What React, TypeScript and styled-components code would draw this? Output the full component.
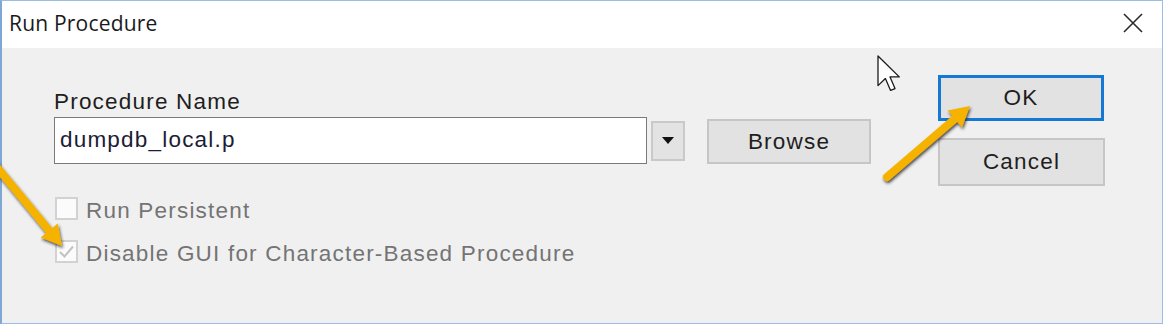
import React from "react";
import styled, { createGlobalStyle } from "styled-components";

const GlobalStyle = createGlobalStyle`
  html, body {
    margin: 0;
    padding: 0;
    background: #f0f0f0;
    overflow: hidden;
  }
`;

// janela principal
const Window = styled.div`
  position: relative;
  width: 1163px;
  height: 324px;
  box-sizing: border-box;
  background: #f0f0f0;
  border: 1px solid #9cbde3;
  border-left: 2px solid #7fa7d6;
  display: flex;
  flex-direction: column;
  font-family: "Liberation Sans", Arial, sans-serif;
`;

const TitleBar = styled.div`
  height: 47px;
  background: #ffffff;
  display: flex;
  align-items: center;
  justify-content: space-between;
  padding: 0 0 3px 7px;
  box-sizing: border-box;
`;

const Title = styled.span`
  font-family: "Open Sans", "Noto Sans", sans-serif;
  font-size: 21px;
  letter-spacing: 0.2px;
  color: #1a1a1a;
`;

const CloseButton = styled.div`
  width: 46px;
  height: 44px;
  display: flex;
  align-items: center;
  justify-content: center;
  margin-right: 6px;
`;

const Body = styled.div`
  flex: 1;
  display: flex;
  justify-content: space-between;
  padding: 0 57px 0 52px;
`;

const LeftColumn = styled.div`
  display: flex;
  flex-direction: column;
  padding-top: 41px;
`;

const RightColumn = styled.div`
  display: flex;
  flex-direction: column;
  padding-top: 27px;
  gap: 17px;
`;

const Label = styled.div<{ $disabled?: boolean }>`
  font-size: 22.5px;
  line-height: 25px;
  letter-spacing: 1.2px;
  color: ${(p) => (p.$disabled ? "#747474" : "#1e1e1e")};
  white-space: nowrap;
`;

const InputRow = styled.div`
  display: flex;
  align-items: center;
  margin-top: 3px;
  height: 47px;
`;

const TextBox = styled.input`
  width: 593px;
  height: 47px;
  box-sizing: border-box;
  border: 1px solid #7a7a7a;
  background: #ffffff;
  padding: 0 0 1px 5px;
  font-family: "Liberation Sans", Arial, sans-serif;
  font-size: 22.5px;
  letter-spacing: 1.2px;
  color: #1c1c34;
  outline: none;
`;

const DropButton = styled.div`
  width: 34px;
  height: 40px;
  margin-left: 4px;
  box-sizing: border-box;
  border: 2px solid #c9c9c9;
  background: #e3e3e3;
  display: flex;
  align-items: center;
  justify-content: center;
`;

const Button = styled.div<{ $width: number; $height: number; $default?: boolean }>`
  width: ${(p) => p.$width}px;
  height: ${(p) => p.$height}px;
  box-sizing: border-box;
  border: ${(p) => (p.$default ? "3px solid #1478d4" : "2px solid #c6c6c6")};
  background: #e2e2e2;
  display: flex;
  align-items: center;
  justify-content: center;
  font-size: 22.5px;
  letter-spacing: 1.2px;
  color: #1e1e1e;
`;

const BrowseButton = styled(Button)`
  margin-left: 22px;
  margin-top: 2px;
`;

const Options = styled.div`
  display: flex;
  flex-direction: column;
  gap: 20px;
  margin-top: 33px;
  padding-left: 1px;
`;

const CheckRow = styled.div`
  display: flex;
  align-items: center;
  gap: 8px;
  height: 23px;
`;

const CheckText = styled(Label)`
  margin-top: 3px;
`;

const CheckBox = styled.div`
  width: 23px;
  height: 23px;
  box-sizing: border-box;
  border: 2px solid #d2d2d2;
  background: #fbfbfb;
  display: flex;
  align-items: center;
  justify-content: center;
`;

const Overlay = styled.svg`
  position: absolute;
  left: -2px;
  top: -1px;
  width: 1163px;
  height: 324px;
  pointer-events: none;
`;

function CheckOption({ label, checked }: { label: string; checked?: boolean }) {
  return (
    <CheckRow>
      <CheckBox>
        {checked && (
          <svg width="17" height="15" viewBox="0 0 17 15">
            <path d="M2 8 L6.5 12.5 L15 2.5" fill="none" stroke="#c2c2c2" strokeWidth="2" />
          </svg>
        )}
      </CheckBox>
      <CheckText $disabled>{label}</CheckText>
    </CheckRow>
  );
}

export default function App() {
  return (
    <>
      <GlobalStyle />
      <Window>
        <TitleBar>
          <Title>Run Procedure</Title>
          <CloseButton>
            <svg width="20" height="20" viewBox="0 0 20 20">
              <path d="M1 1 L19 19 M19 1 L1 19" stroke="#2b2b2b" strokeWidth="1.6" />
            </svg>
          </CloseButton>
        </TitleBar>
        <Body>
          <LeftColumn>
            <Label>Procedure Name</Label>
            <InputRow>
              <TextBox value="dumpdb_local.p" readOnly />
              <DropButton>
                <svg width="12" height="7" viewBox="0 0 12 7">
                  <path d="M0 0 L12 0 L6 7 Z" fill="#111" />
                </svg>
              </DropButton>
              <BrowseButton $width={164} $height={45}>
                Browse
              </BrowseButton>
            </InputRow>
            <Options>
              <CheckOption label="Run Persistent" />
              <CheckOption label="Disable GUI for Character-Based Procedure" checked />
            </Options>
          </LeftColumn>
          <RightColumn>
            <Button $width={166} $height={46} $default>
              OK
            </Button>
            <Button $width={167} $height={48}>
              Cancel
            </Button>
          </RightColumn>
        </Body>

        {/* anotações por cima: setas amarelas e cursor */}
        <Overlay viewBox="0 0 1163 324">
          <defs>
            <filter id="sombra" x="-20%" y="-20%" width="140%" height="140%">
              <feDropShadow dx="1" dy="2" stdDeviation="1.5" floodColor="#222" floodOpacity="0.8" />
            </filter>
          </defs>
          <g filter="url(#sombra)">
            <line x1="887" y1="177" x2="957" y2="117" stroke="#f5b302" strokeWidth="8" strokeLinecap="round" />
            <polygon points="970,106 947.7,110.6 962,127.4" fill="#f5b302" />
            <line x1="-5" y1="165" x2="52" y2="234" stroke="#f5b302" strokeWidth="8" strokeLinecap="round" />
            <polygon points="62,246 57.7,223.6 40.7,237.6" fill="#f5b302" />
          </g>
          <path
            transform="translate(878 56) scale(1.85)"
            d="M0 0 L0 16 L4 12.2 L6.8 18.6 L9.2 17.6 L6.5 11.3 L11.5 11.3 Z"
            fill="#ffffff"
            stroke="#1a1a1a"
            strokeWidth="0.7"
            strokeLinejoin="round"
          />
        </Overlay>
      </Window>
    </>
  );
}
